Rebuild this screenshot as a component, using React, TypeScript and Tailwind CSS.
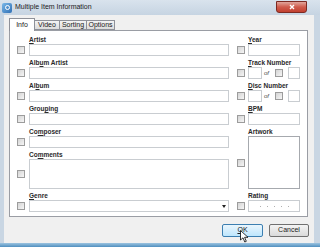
import React from 'react'

// ============================================================================
// Multiple Item Information dialog (Vista style)
// ============================================================================

function Check() {
  return <div className="w-[8px] h-[8px] shrink-0 border border-[#9c9c9c] bg-gradient-to-br from-[#d4d4d4] to-[#f6f6f6]" />
}

function Box({ className = '', children }: { className?: string; children?: React.ReactNode }) {
  return <div className={`bg-white border border-[#c9cdd1] ${className}`}>{children}</div>
}

function Label({ children, right }: { children: React.ReactNode; right?: boolean }) {
  return (
    <div className={`h-[8px] text-[6.5px] leading-[8px] font-bold text-[#2a2a2a] whitespace-nowrap ${right ? 'pl-[11px]' : 'pl-[12px]'}`}>
      {children}
    </div>
  )
}

function Field({ label, right, boxClass = 'h-[12px]', children }: { label: React.ReactNode; right?: boolean; boxClass?: string; children?: React.ReactNode }) {
  return (
    <div className="flex flex-col">
      <Label right={right}>{label}</Label>
      <div className={`flex items-center ${right ? 'gap-[3px]' : 'gap-[4px]'}`}>
        <Check />
        <Box className={`flex-1 ${boxClass}`}>{children}</Box>
      </div>
    </div>
  )
}

function NumberField({ label }: { label: React.ReactNode }) {
  return (
    <div className="flex flex-col">
      <Label right>{label}</Label>
      <div className="flex items-center">
        <Check />
        <Box className="ml-[3px] w-[14px] h-[12px]" />
        <span className="ml-[2px] w-[9px] text-[6px] italic text-[#444] leading-none">of</span>
        <div className="ml-[2px]"><Check /></div>
        <Box className="ml-[5px] w-[12px] h-[12px]" />
      </div>
    </div>
  )
}

const Tab = ({ children, active }: { children: React.ReactNode; active?: boolean }) => (
  <div
    className={`flex items-center justify-center text-[7px] text-[#1a1a1a] border border-[#8e9199] ${
      active ? 'h-[13px] bg-white border-b-0 -mb-px z-10 relative' : 'h-[10px] -ml-px bg-gradient-to-b from-[#f4f4f4] to-[#dcdcdc]'
    }`}
  >
    {children}
  </div>
)

export default function App() {
  return (
    <div className="relative w-[320px] h-[247px] overflow-hidden flex flex-col bg-[#c9d6e3] font-['Liberation_Sans',Arial,sans-serif]">
      {/* title bar */}
      <div className="h-[15px] flex items-center bg-gradient-to-b from-[#d9e3ed] to-[#c6d4e2]">
        <div className="ml-[2px] w-[10px] h-[10px] rounded-[2px] bg-gradient-to-br from-[#7ab8e8] to-[#2f6fb5] flex items-center justify-center">
          <div className="w-[5px] h-[5px] rounded-full border border-white" />
        </div>
        <span className="ml-[3px] text-[7px] text-[#1b1b1b]">Multiple Item Information</span>
        <div className="ml-auto mr-[13px] mb-[2px] w-[31px] h-[12px] rounded-b-[3px] border border-[#7d2a22] bg-gradient-to-b from-[#e0a59c] via-[#cf5b4c] to-[#c2402f] flex items-center justify-center">
          <svg width="6" height="6" viewBox="0 0 6 6">
            <path d="M1 1 L5 5 M5 1 L1 5" stroke="white" strokeWidth="1.4" />
          </svg>
        </div>
      </div>

      {/* client area */}
      <div className="flex-1 ml-[4px] mr-[6px] bg-[#f0f0f0] flex flex-col pb-[6px]">
        {/* tabs */}
        <div className="mt-[3px] ml-[5px] h-[12px] flex items-end">
          <div className="w-[26px]"><Tab active>Info</Tab></div>
          <div className="w-[25px]"><Tab>Video</Tab></div>
          <div className="w-[27px]"><Tab>Sorting</Tab></div>
          <div className="w-[28px]"><Tab>Options</Tab></div>
        </div>

        {/* panel */}
        <div className="ml-[5px] w-[299px] h-[187px] bg-white border border-[#9a9da4] flex gap-[8px] pl-[7px] pt-[5px]">
          <div className="w-[212px] flex flex-col gap-[3px]">
            <Field label={<><span className="underline">A</span>rtist</>} />
            <Field label={<>Alb<span className="underline">u</span>m Artist</>} />
            <Field label={<>Al<span className="underline">b</span>um</>} />
            <Field label={<>Grou<span className="underline">p</span>ing</>} />
            <Field label={<>Co<span className="underline">m</span>poser</>} />
            <div className="flex flex-col">
              <Label>Co<span className="underline">m</span>ments</Label>
              <div className="flex items-center gap-[4px]">
                <Check />
                <Box className="flex-1 h-[30px]" />
              </div>
            </div>
            <Field label={<><span className="underline">G</span>enre</>}>
              <div className="h-full flex items-center justify-end pr-[2px]">
                <svg width="4" height="3" viewBox="0 0 4 3"><path d="M0 0 H4 L2 3 Z" fill="#222" /></svg>
              </div>
            </Field>
          </div>

          <div className="w-[63px] flex flex-col gap-[3px]">
            <Field right label={<><span className="underline">Y</span>ear</>} />
            <NumberField label={<><span className="underline">T</span>rack Number</>} />
            <NumberField label={<><span className="underline">D</span>isc Number</>} />
            <Field right label={<><span className="underline">B</span>PM</>} />
            <div className="flex flex-col">
              <Label right>Artwork</Label>
              <div className="flex items-center gap-[3px]">
                <Check />
                <div className="flex-1 h-[53px] bg-white border border-[#a6a9ae]" />
              </div>
            </div>
            <Field right label="Rating">
              <div className="h-full flex items-center justify-center gap-[6px]">
                <span className="w-px h-px bg-[#b0b0b0]" />
                <span className="w-px h-px bg-[#b0b0b0]" />
                <span className="w-px h-px bg-[#b0b0b0]" />
                <span className="w-px h-px bg-[#b0b0b0]" />
                <span className="w-px h-px bg-[#b0b0b0]" />
              </div>
            </Field>
          </div>
        </div>

        {/* buttons */}
        <div className="mt-[7px] h-[13px] flex justify-end gap-[6px] pr-[5px]">
          <div className="w-[41px] h-[13px] rounded-[2px] border border-[#3c7fb1] bg-gradient-to-b from-[#eaf6fd] to-[#bee6fd] flex items-center justify-center text-[7px] text-[#1a1a1a]">
            <span className="underline">O</span>K
          </div>
          <div className="w-[40px] h-[13px] rounded-[2px] border border-[#707070] bg-gradient-to-b from-[#f4f4f4] to-[#dadada] flex items-center justify-center text-[7px] text-[#1a1a1a]">
            Cancel
          </div>
        </div>
      </div>

      {/* bottom frame edge */}
      <div className="h-[4px] bg-gradient-to-b from-[#9cc4e0] to-[#4f8fbf]" />

      {/* mouse pointer over OK */}
      <svg className="absolute left-[240px] top-[230px]" width="9" height="13" viewBox="0 0 9 13">
        <path d="M0.5 0.5 L0.5 10 L3 7.8 L4.8 12 L6.3 11.3 L4.6 7.3 L8 7.3 Z" fill="white" stroke="black" strokeWidth="0.8" strokeLinejoin="round" />
      </svg>
    </div>
  )
}
